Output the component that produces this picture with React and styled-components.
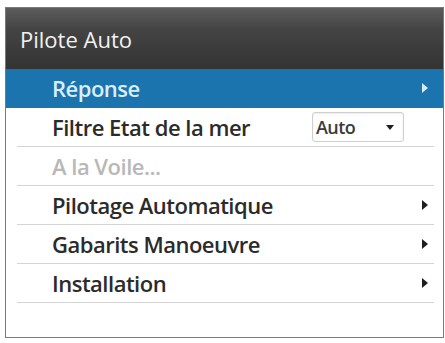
import React from "react";
import styled, { createGlobalStyle } from "styled-components";

const GlobalStyle = createGlobalStyle`
  html, body {
    margin: 0;
    padding: 0;
    background: #ffffff;
  }
  body {
    font-family: "Open Sans", "Liberation Sans", sans-serif;
  }
`;

const Panel = styled.div`
  box-sizing: border-box;
  margin: 7px 0 0 5px;
  width: 439px;
  height: 331px;
  border: 1.5px solid #7a7a7a;
  background: #ffffff;
  display: flex;
  flex-direction: column;
`;

const Header = styled.div`
  height: 61px;
  flex-shrink: 0;
  display: flex;
  align-items: center;
  padding-left: 14px;
  background: linear-gradient(to bottom, #5c5c5c 0%, #444444 35%, #333333 100%);
  color: #f2f2f2;
  font-size: 22px;
  letter-spacing: 0;
`;

const List = styled.div`
  display: flex;
  flex-direction: column;
`;

const Row = styled.div`
  box-sizing: border-box;
  height: 39px;
  display: flex;
  align-items: center;
  justify-content: space-between;
  margin: ${(p) => (p.$selected ? "0" : "0 9px 0 11px")};
  padding: ${(p) => (p.$selected ? "0 15px 1px 46px" : "0 6px 0 35px")};
  background: ${(p) => (p.$selected ? "#1b74ae" : "transparent")};
  border-bottom: ${(p) => (p.$selected ? "none" : "1.5px solid #d4d4d4")};
  color: ${(p) =>
    p.$selected ? "#d9eefa" : p.$disabled ? "#b8b8b8" : "#2b2b2b"};
  font-size: 22px;
  font-weight: 600;
  letter-spacing: -0.5px;
`;

const Label = styled.span`
  white-space: nowrap;
`;

const Arrow = styled.span`
  width: 0;
  height: 0;
  border-top: 5px solid transparent;
  border-bottom: 5px solid transparent;
  border-left: 6px solid ${(p) => (p.$light ? "#d4ebf8" : "#1e1e1e")};
`;

const Select = styled.div`
  box-sizing: border-box;
  width: 92px;
  height: 30px;
  margin-right: 24px;
  display: flex;
  align-items: center;
  justify-content: space-between;
  padding: 0 9px 0 3px;
  border: 1px solid #cfcfcf;
  border-radius: 3px;
  box-shadow: inset 0 1px 2px rgba(0, 0, 0, 0.08);
  font-size: 18px;
  font-weight: 600;
  color: #3a3a3a;
  letter-spacing: -0.6px;
`;

const Caret = styled.span`
  width: 0;
  height: 0;
  border-left: 4px solid transparent;
  border-right: 4px solid transparent;
  border-top: 5px solid #1e1e1e;
`;

const items = [
  { label: "Réponse", selected: true, arrow: true },
  { label: "Filtre Etat de la mer", select: "Auto" },
  { label: "A la Voile...", disabled: true },
  { label: "Pilotage Automatique", arrow: true },
  { label: "Gabarits Manoeuvre", arrow: true },
  { label: "Installation", arrow: true },
];

export default function App() {
  return (
    <>
      <GlobalStyle />
      <Panel>
        <Header>Pilote Auto</Header>
        <List>
          {items.map((it) => (
            <Row key={it.label} $selected={it.selected} $disabled={it.disabled}>
              <Label>{it.label}</Label>
              {it.arrow && <Arrow $light={it.selected} />}
              {it.select && (
                <Select>
                  <span>{it.select}</span>
                  <Caret />
                </Select>
              )}
            </Row>
          ))}
        </List>
      </Panel>
    </>
  );
}
